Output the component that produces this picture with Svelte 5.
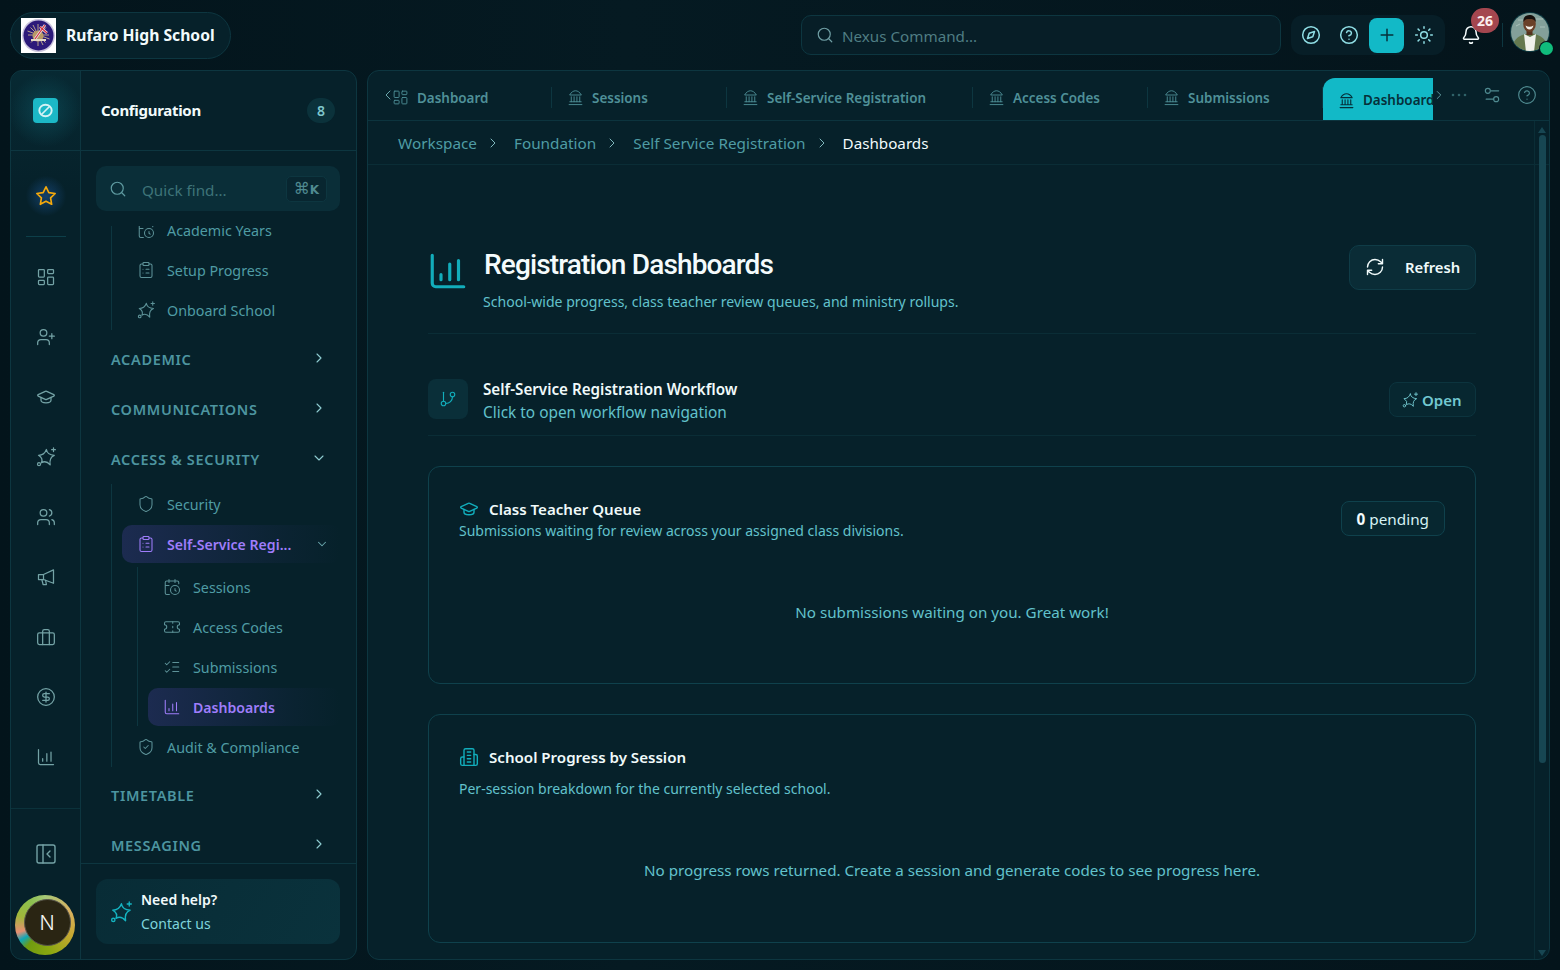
<script lang="ts">
  // lucide-style icon bodies, drawn on a 24 box
  const ICONS: Record<string, string> = {
    star: '<polygon points="12 2 15.09 8.26 22 9.27 17 14.14 18.18 21.02 12 17.77 5.82 21.02 7 14.14 2 9.27 8.91 8.26"/>',
    grid: '<rect x="3" y="3" width="7" height="9" rx="1"/><rect x="14" y="3" width="7" height="5" rx="1"/><rect x="14" y="12" width="7" height="9" rx="1"/><rect x="3" y="16" width="7" height="5" rx="1"/>',
    userPlus: '<path d="M16 21v-2a4 4 0 0 0-4-4H6a4 4 0 0 0-4 4v2"/><circle cx="9" cy="7" r="4"/><path d="M19 8v6M22 11h-6"/>',
    cap: '<path d="M21.42 10.922a1 1 0 0 0-.019-1.838L12.83 5.18a2 2 0 0 0-1.66 0L2.6 9.08a1 1 0 0 0 0 1.832l8.57 3.908a2 2 0 0 0 1.66 0z"/><path d="M6 12.5V16a6 3 0 0 0 12 0v-3.5"/>',
    spark: '<path d="M12.5 3 Q13.5 9.5 22 10 Q15.5 12.5 17 21.5 Q12 15.5 6.500 19 Q9 13.5 3 10 Q10 10 12.5 3z"/><path d="M21 1v4.500M18.750 3.250h4.500"/><circle cx="3.600" cy="20.600" r="1.800"/>',
    users: '<path d="M16 21v-2a4 4 0 0 0-4-4H6a4 4 0 0 0-4 4v2"/><circle cx="9" cy="7" r="4"/><path d="M22 21v-2a4 4 0 0 0-3-3.87M16 3.13a4 4 0 0 1 0 7.75"/>',
    megaphone: '<path d="M3 9h6L21 3.500v16L9 15H3z"/><path d="M9 9v6M7 15l1.500 6h4l-1-5"/>',
    briefcase: '<rect x="2" y="7" width="20" height="14" rx="2"/><path d="M16 21V5a2 2 0 0 0-2-2h-4a2 2 0 0 0-2 2v16"/>',
    dollar: '<circle cx="12" cy="12" r="10"/><path d="M16 8h-6a2 2 0 1 0 0 4h4a2 2 0 1 1 0 4H8M12 18V6"/>',
    chart: '<path d="M3 3v16a2 2 0 0 0 2 2h16"/><path d="M8 17v-3M13 17V8M18 17V6"/>',
    collapse: '<rect x="3" y="3" width="18" height="18" rx="2"/><path d="M9 3v18M16 15l-3-3 3-3"/>',
    search: '<circle cx="11" cy="11" r="8"/><path d="m21 21-4.3-4.3"/>',
    right: '<path d="m9 18 6-6-6-6"/>',
    left: '<path d="m15 18-6-6 6-6"/>',
    down: '<path d="m6 9 6 6 6-6"/>',
    calendar: '<path d="M21 7.5V6a2 2 0 0 0-2-2H5a2 2 0 0 0-2 2v14a2 2 0 0 0 2 2h3.5M16 2v4M8 2v4M3 10h5M17.5 17.5 16 16.3V14"/><circle cx="16" cy="16" r="6"/>',
    clipboard: '<rect x="8" y="2" width="8" height="4" rx="1"/><path d="M16 4h2a2 2 0 0 1 2 2v14a2 2 0 0 1-2 2H6a2 2 0 0 1-2-2V6a2 2 0 0 1 2-2h2M12 11h4M12 16h4M8 11h.01M8 16h.01"/>',
    shield: '<path d="M20 13c0 5-3.5 7.5-7.66 8.95a1 1 0 0 1-.67-.01C7.5 20.5 4 18 4 13V6a1 1 0 0 1 1-1c2 0 4.5-1.2 6.24-2.72a1.17 1.17 0 0 1 1.52 0C14.51 3.81 17 5 19 5a1 1 0 0 1 1 1z"/>',
    shieldCheck: '<path d="M20 13c0 5-3.5 7.5-7.66 8.95a1 1 0 0 1-.67-.01C7.5 20.5 4 18 4 13V6a1 1 0 0 1 1-1c2 0 4.5-1.2 6.24-2.72a1.17 1.17 0 0 1 1.52 0C14.51 3.81 17 5 19 5a1 1 0 0 1 1 1z"/><path d="m9 12 2 2 4-4"/>',
    ticket: '<path d="M2 9a3 3 0 0 1 0 6v2a2 2 0 0 0 2 2h16a2 2 0 0 0 2-2v-2a3 3 0 0 1 0-6V7a2 2 0 0 0-2-2H4a2 2 0 0 0-2 2Z"/><path d="M13 5v2M13 17v2M13 11v2"/>',
    checks: '<path d="m3 17 2 2 4-4M3 7l2 2 4-4M13 6h8M13 12h8M13 18h8"/>',
    bank: '<path d="M3 22h18M6 18v-7M10 18v-7M14 18v-7M18 18v-7M4 18h16"/><path d="M4 8C6 4.500 9 2.500 12 2.500S18 4.500 20 8z"/>',
    branch: '<path d="M6 3v12"/><circle cx="18" cy="6" r="3"/><circle cx="6" cy="18" r="3"/><path d="M18 9a9 9 0 0 1-9 9"/>',
    compass: '<circle cx="12" cy="12" r="10"/><polygon points="16.24 7.76 14.12 14.12 7.76 16.24 9.88 9.88"/>',
    help: '<circle cx="12" cy="12" r="10"/><path d="M9.09 9a3 3 0 0 1 5.83 1c0 2-3 3-3 3M12 17h.01"/>',
    plus: '<path d="M5 12h14M12 5v14"/>',
    sun: '<circle cx="12" cy="12" r="4"/><path d="M12 2v2M12 20v2M4.93 4.93l1.41 1.41M17.66 17.66l1.41 1.41M2 12h2M20 12h2M6.34 17.66l-1.41 1.41M19.07 4.93l-1.41 1.41"/>',
    bell: '<path d="M10.268 21a2 2 0 0 0 3.464 0"/><path d="M3.262 15.326A1 1 0 0 0 4 17h16a1 1 0 0 0 .74-1.673C19.41 13.956 18 12.499 18 8A6 6 0 0 0 6 8c0 4.499-1.411 5.956-2.738 7.326"/>',
    refresh: '<path d="M3 12a9 9 0 0 1 9-9 9.75 9.75 0 0 1 6.74 2.74L21 8M21 3v5h-5M21 12a9 9 0 0 1-9 9 9.75 9.75 0 0 1-6.74-2.74L3 16M8 16H3v5"/>',
    sliders: '<path d="M20 7h-9M14 17H5"/><circle cx="17" cy="17" r="3"/><circle cx="7" cy="7" r="3"/>',
    building: '<path d="M6 22V4a2 2 0 0 1 2-2h8a2 2 0 0 1 2 2v18Z"/><path d="M6 12H4a2 2 0 0 0-2 2v6a2 2 0 0 0 2 2h2M18 9h2a2 2 0 0 1 2 2v9a2 2 0 0 1-2 2h-2M10 6h4M10 10h4M10 14h4M10 18h4"/>',
  };

  const railIcons = ["grid", "userPlus", "cap", "spark", "users", "megaphone", "briefcase", "dollar", "chart"];

  const tabs = [
    { label: "Dashboard", icon: "grid" },
    { label: "Sessions", icon: "bank" },
    { label: "Self-Service Registration", icon: "bank" },
    { label: "Access Codes", icon: "bank" },
    { label: "Submissions", icon: "bank" },
  ];

  const crumbs = ["Workspace", "Foundation", "Self Service Registration"];

  const subItems = [
    { label: "Sessions", icon: "calendar" },
    { label: "Access Codes", icon: "ticket" },
    { label: "Submissions", icon: "checks" },
    { label: "Dashboards", icon: "chart", active: true },
  ];
</script>

{#snippet icon(name: string, size = 18, width = 1.5)}
  <svg class="ico" width={size} height={size} viewBox="0 0 24 24" fill="none" stroke="currentColor" stroke-width={width} stroke-linecap="round" stroke-linejoin="round" aria-hidden="true">{@html ICONS[name]}</svg>
{/snippet}

{#snippet navItem(label: string, name: string, active = false)}
  <div class="item" class:active>
    {@render icon(name, 18, 1.4)}
    <span class="item-label">{label}</span>
  </div>
{/snippet}

{#snippet heading(label: string, open = false)}
  <div class="heading">
    <span>{label}</span>
    {@render icon(open ? "down" : "right", 16, 1.6)}
  </div>
{/snippet}

<div class="app">
  <header class="topbar">
    <div class="school">
      <svg class="school-logo" width="35" height="35" viewBox="0 0 35 35" aria-hidden="true">
        <rect width="35" height="35" fill="#fff" />
        <circle cx="17.5" cy="17.5" r="16.5" fill="#c9c3dc" />
        <circle cx="17.5" cy="17.5" r="15" fill="#2c1a7a" />
        <g stroke="#d9c48f" stroke-width=".8">
          <path d="M17 6v22M7 17h21M9.5 9.5l15 15M25 9.5l-15 15M12 7l10 20M6.5 13l22 8" />
        </g>
        <circle cx="17" cy="18" r="5.5" fill="#b99a66" />
        <path d="M14 21 24 7M19 9l7 6" stroke="#e8e4ee" stroke-width="2.6" />
        <path d="M14 21 24 7M19 9l7 6" stroke="#d8303c" stroke-width="1.2" />
        <path d="M10 22h15" stroke="#e4d9c6" stroke-width="2" />
      </svg>
      <span>Rufaro High School</span>
    </div>

    <div class="command">
      {@render icon("search", 18, 1.6)}
      <span>Nexus Command...</span>
    </div>

    <div class="tools">
      <button class="tool">{@render icon("compass", 20, 1.8)}</button>
      <button class="tool">{@render icon("help", 20, 1.8)}</button>
      <button class="tool add">{@render icon("plus", 20, 1.8)}</button>
      <button class="tool">{@render icon("sun", 20, 1.8)}</button>
    </div>

    <div class="bell">
      {@render icon("bell", 20, 1.8)}
      <span class="bell-count">26</span>
    </div>
    <span class="bar-sep"></span>
    <div class="avatar">
      <svg width="40" height="40" viewBox="0 0 40 40" aria-hidden="true">
        <clipPath id="avatar-clip"><circle cx="20" cy="20" r="19" /></clipPath>
        <circle cx="20" cy="20" r="20" fill="#0d3a42" />
        <g clip-path="url(#avatar-clip)">
          <rect width="40" height="40" fill="#83a09a" />
          <path d="M8 8h6M26 7h7M6 14l4-2M30 15h5" stroke="#b4c8c2" stroke-width=".8" />
          <path d="M2 40c0-12 6-17 18-19 12 2 18 7 18 19z" fill="#65794f" />
          <path d="M14 22l6 3 6-3-2 18h-8z" fill="#f0f2ec" />
          <rect x="16.500" y="16" width="6" height="7" fill="#55331f" />
          <ellipse cx="19.500" cy="12" rx="6.300" ry="8" fill="#6a4028" />
          <path d="M13.200 10c0-5.500 3-7 6.300-7s6.300 1.500 6.300 7c-1.500-2.500-3-3-6.300-3s-4.800.5-6.300 3z" fill="#17100c" />
          <path d="M15.500 13.500q4 2.500 8 0-1 4-4 4t-4-4z" fill="#f4f1ea" />
        </g>
      </svg>
      <span class="online"></span>
    </div>
  </header>

  <div class="shell">
    <aside class="sidebar">
      <div class="rail">
        <div class="rail-top">
          <svg width="25" height="25" viewBox="0 0 25 25" aria-hidden="true">
            <rect width="25" height="25" rx="4" fill="#1cb8c6" />
            <ellipse cx="12.500" cy="12.500" rx="6.200" ry="5.800" fill="none" stroke="#d4f3f5" stroke-width="1.900" />
            <path d="M8.500 16.500 16.500 8.500" stroke="#d4f3f5" stroke-width="1.700" />
          </svg>
        </div>
        <div class="rail-star">{@render icon("star", 22, 1.8)}</div>
        <span class="rail-line"></span>
        {#each railIcons as name}
          <div class="rail-btn">{@render icon(name, 20, 1.5)}</div>
        {/each}
        <div class="rail-foot">
          <div class="rail-collapse">{@render icon("collapse", 24, 1.4)}</div>
          <div class="ring"><div class="ring-in">N</div></div>
        </div>
      </div>

      <div class="side">
        <div class="side-head">
          <span class="side-title">Configuration</span>
          <span class="side-count">8</span>
        </div>
        <div class="find-wrap">
          <div class="find">
            {@render icon("search", 18, 1.6)}
            <span class="find-text">Quick find...</span>
            <kbd>⌘<small>K</small></kbd>
          </div>
        </div>

        <nav class="nav">
          <div class="nav-scroll">
            <div class="tree">
              {@render navItem("Academic Years", "calendar")}
              {@render navItem("Setup Progress", "clipboard")}
              {@render navItem("Onboard School", "spark")}
            </div>
            {@render heading("ACADEMIC")}
            {@render heading("COMMUNICATIONS")}
            {@render heading("ACCESS & SECURITY", true)}
            <div class="tree open-tree">
              {@render navItem("Security", "shield")}
              <div class="item active parent">
                {@render icon("clipboard", 18, 1.4)}
                <span class="item-label">Self-Service Regi...</span>
                {@render icon("down", 14, 1.8)}
              </div>
              <div class="tree sub">
                {#each subItems as s}
                  {@render navItem(s.label, s.icon, s.active)}
                {/each}
              </div>
              {@render navItem("Audit & Compliance", "shieldCheck")}
            </div>
            {@render heading("TIMETABLE")}
            {@render heading("MESSAGING")}
          </div>
        </nav>

        <div class="help-wrap">
          <div class="help">
            {@render icon("spark", 22, 1.5)}
            <div>
              <div class="help-title">Need help?</div>
              <div class="help-sub">Contact us</div>
            </div>
          </div>
        </div>
      </div>
    </aside>

    <main class="main">
      <div class="tabbar">
        <div class="tabs">
          <span class="tabs-prev">{@render icon("left", 16, 1.5)}</span>
          {#each tabs as t}
            <div class="tab">
              <span class="tab-ico">{@render icon(t.icon, 17, 1.3)}</span>
              <span>{t.label}</span>
            </div>
          {/each}
          <div class="tab current">
            <span class="tab-ico">{@render icon("bank", 17, 1.6)}</span>
            <span>Dashboards</span>
          </div>
        </div>
        <div class="tab-tools">
          <span class="tabs-next">{@render icon("right", 14, 1.5)}</span>
          <svg class="dots" width="16" height="4" viewBox="0 0 16 4" aria-hidden="true">
            <circle cx="2" cy="2" r="1.300" />
            <circle cx="8" cy="2" r="1.300" />
            <circle cx="14" cy="2" r="1.300" />
          </svg>
          <span class="tool-sliders">{@render icon("sliders", 20, 1.4)}</span>
          <span class="tool-help">{@render icon("help", 20, 1.4)}</span>
        </div>
      </div>

      <div class="crumbs">
        {#each crumbs as c}
          <span>{c}</span>
          {@render icon("right", 16, 1.5)}
        {/each}
        <span class="crumb-now">Dashboards</span>
      </div>

      <div class="content">
        <section class="page-head">
          <span class="page-ico">{@render icon("chart", 42, 1.8)}</span>
          <div class="page-text">
            <h1>Registration Dashboards</h1>
            <p>School-wide progress, class teacher review queues, and ministry rollups.</p>
          </div>
          <button class="refresh">
            {@render icon("refresh", 20, 1.7)}
            <span>Refresh</span>
          </button>
        </section>

        <section class="workflow">
          <span class="wf-ico">{@render icon("branch", 18, 1.5)}</span>
          <div class="wf-text">
            <div class="wf-title">Self-Service Registration Workflow</div>
            <div class="wf-sub">Click to open workflow navigation</div>
          </div>
          <button class="open">
            {@render icon("spark", 16, 1.4)}
            <span>Open</span>
          </button>
        </section>

        <section class="card">
          <div class="card-row">
            <div>
              <div class="card-title">{@render icon("cap", 20, 1.7)}<span>Class Teacher Queue</span></div>
              <div class="card-sub">Submissions waiting for review across your assigned class divisions.</div>
            </div>
            <span class="pending"><b>0</b> pending</span>
          </div>
          <p class="empty">No submissions waiting on you. Great work!</p>
        </section>

        <section class="card second">
          <div class="card-title">{@render icon("building", 20, 1.7)}<span>School Progress by Session</span></div>
          <div class="card-sub spaced">Per-session breakdown for the currently selected school.</div>
          <p class="empty">No progress rows returned. Create a session and generate codes to see progress here.</p>
        </section>
      </div>

      <div class="scrollbar">
        <span class="arrow up"></span>
        <span class="thumb"></span>
        <span class="arrow dn"></span>
      </div>
    </main>
  </div>
</div>

<style>
  :global(body) {
    margin: 0;
    background: #04131a;
    font-family: "Noto Sans", "Open Sans", sans-serif;
  }
  .ico { display: block; flex-shrink: 0; }
  button { font-family: inherit; cursor: pointer; padding: 0; }

  .app {
    height: 970px;
    overflow: hidden;
    display: grid;
    grid-template-rows: 70px 1fr;
    background: linear-gradient(90deg, #03141b, #051a22 40%, #04141b);
  }

  /* top bar */
  .topbar {
    display: flex;
    align-items: center;
    padding: 0 10px;
  }
  .school {
    display: flex;
    align-items: center;
    gap: 10px;
    width: 221px;
    height: 47px;
    box-sizing: border-box;
    padding-left: 10px;
    border: 1px solid #0d3640;
    border-radius: 24px;
    background: #06212a;
    color: #f2fbfc;
    font-size: 15.7px;
    font-weight: 700;
  }
  .school-logo { flex-shrink: 0; }
  .command {
    display: flex;
    align-items: center;
    gap: 8px;
    width: 480px;
    height: 40px;
    box-sizing: border-box;
    margin-left: 570px;
    padding-left: 14px;
    border: 1px solid #0d3640;
    border-radius: 10px;
    background: #071e27;
    color: #6f9ea4;
    font-size: 15.2px;
  }
  .command span { color: #4f7d83; padding-top: 2px; }
  .tools {
    display: flex;
    align-items: center;
    margin-left: 10px;
    width: 154px;
    height: 40px;
    padding-left: 1px;
    box-sizing: border-box;
    border-radius: 12px;
    background: #071e27;
  }
  .tool {
    width: 38px;
    height: 35px;
    display: flex;
    align-items: center;
    justify-content: center;
    border: none;
    border-radius: 8px;
    background: none;
    color: #8fdde4;
  }
  .tool.add {
    width: 35px;
    margin: 0 1px;
    background: #12b9c7;
    color: #06303a;
  }
  .bell {
    position: relative;
    margin-left: 16px;
    color: #f4fbfc;
  }
  .bell-count {
    position: absolute;
    top: -17px;
    left: 10px;
    width: 28px;
    height: 25px;
    border-radius: 13px;
    background: #a4464f;
    color: #fbeeee;
    font-size: 14px;
    font-weight: 700;
    line-height: 25px;
    text-align: center;
  }
  .bar-sep {
    width: 1px;
    height: 24px;
    margin-left: 21px;
    background: #0d3640;
  }
  .avatar {
    position: relative;
    width: 40px;
    height: 40px;
    margin: -6px 0 0 7px;
  }
  .avatar svg { display: block; }
  .online {
    position: absolute;
    right: -3px;
    bottom: -3px;
    width: 13px;
    height: 13px;
    border-radius: 50%;
    background: #10bc7c;
    box-shadow: 0 0 0 1px #04131a;
  }

  /* shell */
  .shell {
    display: grid;
    grid-template-columns: 347px 1fr;
    gap: 10px;
    padding: 0 10px 10px;
    min-height: 0;
  }

  /* sidebar */
  .sidebar {
    display: grid;
    grid-template-columns: 70px 1fr;
    min-height: 0;
    overflow: hidden;
    border: 1px solid #0d3640;
    border-radius: 12px;
    background: #06212a;
  }
  .rail {
    display: flex;
    flex-direction: column;
    align-items: center;
    border-right: 1px solid #0d3640;
    color: #74a3a6;
    background: linear-gradient(180deg, rgba(8, 48, 58, .55), transparent 120px);
  }
  .rail-top {
    display: flex;
    align-items: center;
    justify-content: center;
    align-self: stretch;
    flex: 0 0 79px;
    border-bottom: 1px solid #0d3640;
    background: radial-gradient(circle at 50% 50%, rgba(18, 110, 125, .4), transparent 70%);
  }
  .rail-star {
    display: flex;
    align-items: center;
    justify-content: center;
    width: 44px;
    height: 44px;
    margin-top: 23px;
    color: #f5a90c;
    background: radial-gradient(circle, rgba(40, 110, 200, .4), transparent 65%);
  }
  .rail-line {
    width: 40px;
    height: 1px;
    margin: 18px 0 10px;
    background: #0d3f49;
  }
  .rail-btn {
    flex: 0 0 60px;
    display: flex;
    align-items: center;
    justify-content: center;
  }
  .rail-foot {
    align-self: stretch;
    margin-top: 21px;
    border-top: 1px solid #0b323b;
    display: flex;
    flex-direction: column;
    align-items: center;
  }
  .rail-collapse { margin-top: 33px; }
  .ring {
    width: 60px;
    height: 60px;
    margin: 29px 0 0 -2px;
    padding: 4px 0 0 9px;
    box-sizing: border-box;
    border-radius: 50%;
    background: conic-gradient(#a6c878, #d9b060 60deg, #c8a832 110deg, #8aa810 170deg, #6f9a10 220deg, #0fa6b8 238deg, #e58f72 255deg, #a0b83a 290deg, #8cc050 330deg, #a6c878);
  }
  .ring-in {
    width: 47px;
    height: 47px;
    box-sizing: border-box;
    display: flex;
    align-items: center;
    justify-content: center;
    border: 1px solid #57544a;
    border-radius: 50%;
    background: #2a2513;
    color: #f4f4f0;
    font-family: "Inter", sans-serif;
    font-size: 20px;
    font-weight: 300;
  }

  .side {
    display: flex;
    flex-direction: column;
    min-width: 0;
    min-height: 0;
  }
  .side-head {
    display: flex;
    align-items: center;
    justify-content: space-between;
    flex: 0 0 79px;
    padding: 0 21px 0 20px;
    border-bottom: 1px solid #0d3640;
  }
  .side-title {
    margin-bottom: 2px;
    color: #f2fbfc;
    font-size: 15px;
    font-weight: 700;
    letter-spacing: -.3px;
  }
  .side-count {
    width: 28px;
    height: 25px;
    border-radius: 13px;
    background: #0b323b;
    color: #7fc6cc;
    font-size: 14px;
    font-weight: 600;
    line-height: 25px;
    text-align: center;
  }
  .find-wrap { padding: 15px 16px 15px 15px; }
  .find {
    display: flex;
    align-items: center;
    height: 45px;
    padding: 0 13px 0 13px;
    border-radius: 10px;
    background: #0a2e38;
    color: #5e9aa0;
  }
  .find-text {
    flex: 1;
    margin-left: 15px;
    padding-top: 2px;
    color: #3e7479;
    font-size: 15.2px;
  }
  kbd {
    width: 41px;
    height: 26px;
    box-sizing: border-box;
    border: 1px solid #0d3640;
    border-radius: 5px;
    background: #082630;
    color: #4f8a90;
    font-family: "DejaVu Sans", sans-serif;
    font-size: 16px;
    font-weight: 400;
    line-height: 24px;
    text-align: center;
  }
  kbd small { font-size: 12px; font-weight: 700; }
  .nav {
    flex: 1;
    min-height: 0;
    overflow: hidden;
    padding: 0 15px 0 30px;
    border-bottom: 1px solid #0d3640;
  }
  .nav-scroll { margin-top: -16px; }
  .tree {
    border-left: 1px solid #0d3640;
    margin-bottom: 3px;
  }
  .tree.open-tree {
    margin-top: 1px;
    margin-bottom: 2px;
  }
  .tree.sub {
    margin: 0 0 0 25px;
  }
  .item {
    display: flex;
    align-items: center;
    height: 40px;
    box-sizing: border-box;
    margin-left: 10px;
    padding-left: 15px;
    color: #4f9ca4;
    font-size: 14.3px;
  }
  .item .ico { color: #5d9298; }
  .item-label {
    flex: 1;
    margin-left: 12px;
    white-space: nowrap;
  }
  .item.active {
    border-radius: 10px;
    background: linear-gradient(90deg, #1c2b50, rgba(28, 43, 80, .2) 75%, rgba(28, 43, 80, 0));
    color: #9f7dfb;
    font-weight: 600;
    font-size: 14.1px;
    height: 38px;
    margin-top: 1px;
    margin-bottom: 1px;
  }
  .item.active .ico { color: #9f7dfb; }
  .item.parent { margin-bottom: 4px; }
  .item.parent > .ico:last-child { color: #6ba9ae; margin-right: 12px; }
  .heading {
    display: flex;
    align-items: center;
    justify-content: space-between;
    height: 50px;
    padding-right: 14px;
    color: #4d95a0;
    font-size: 14.5px;
    font-weight: 600;
    letter-spacing: .65px;
  }
  .heading span { margin-top: 2px; }
  .heading .ico { color: #8fcdd2; }
  .help-wrap { padding: 15px 16px 15px 15px; }
  .help {
    display: flex;
    align-items: center;
    gap: 9px;
    height: 65px;
    padding-left: 14px;
    border-radius: 12px;
    background: linear-gradient(120deg, #082c36, #0a323c);
    color: #14b3c0;
  }
  .help-title {
    color: #f2fbfc;
    font-size: 14px;
    font-weight: 600;
    line-height: 24px;
  }
  .help-sub {
    color: #7fd4dc;
    font-size: 14px;
    line-height: 24px;
  }

  /* main panel */
  .main {
    position: relative;
    display: flex;
    flex-direction: column;
    min-width: 0;
    min-height: 0;
    overflow: hidden;
    border: 1px solid #0d3640;
    border-radius: 12px;
    background: #06212a;
  }
  .tabbar {
    display: flex;
    flex: 0 0 50px;
    box-sizing: border-box;
    border-bottom: 1px solid #0c343e;
  }
  .tabs {
    position: relative;
    display: flex;
    align-items: center;
    width: 1056px;
    margin-left: 9px;
    overflow: hidden;
    color: #4f9098;
    font-size: 13.45px;
    font-weight: 600;
  }
  .tabs-prev {
    position: absolute;
    left: 3px;
    top: 16px;
    color: #6aa6ac;
  }
  .tab {
    position: relative;
    display: flex;
    align-items: center;
    flex-shrink: 0;
    box-sizing: border-box;
    min-width: 175px;
    height: 21px;
    margin-top: 4px;
    padding: 0 46px 0 15px;
    border-right: 1px solid #0d3640;
    white-space: nowrap;
  }
  .tab-ico {
    display: block;
    width: 25px;
    color: #4f9098;
  }
  .tab.current {
    align-self: flex-end;
    height: 42px;
    margin-top: 0;
    padding-top: 2px;
    border: none;
    border-radius: 12px 12px 0 0;
    background: linear-gradient(90deg, #12b9c7 85%, #0e8f9b);
    color: #06303a;
  }
  .tab.current .tab-ico { color: #06303a; }
  .tab-tools {
    display: flex;
    align-items: center;
    color: #4f8a90;
    padding-bottom: 2px;
  }
  .tabs-next {
    margin-left: -1px;
    color: #6aa6ac;
  }
  .dots {
    display: block;
    margin-left: 5px;
    fill: #2f6268;
  }
  .tool-sliders { margin-left: 15px; }
  .tool-help { margin-left: 15px; }
  .crumbs {
    display: flex;
    align-items: center;
    flex: 0 0 44px;
    box-sizing: border-box;
    gap: 8px;
    padding-left: 30px;
    border-bottom: 1px solid #0a2d36;
    color: #4f9ca4;
    font-size: 15.3px;
  }
  .crumbs .ico { color: #7fb8bd; margin-right: 5px; }
  .crumb-now {
    color: #f2fbfc;
    font-size: 15.2px;
  }
  .content {
    padding: 80px 73px 0 60px;
  }
  .page-head {
    display: flex;
    align-items: flex-start;
    padding-bottom: 20px;
    border-bottom: 1px solid #0a2d36;
  }
  .page-ico {
    width: 56px;
    margin-top: 5px;
    margin-left: -1px;
    color: #12adbb;
  }
  .page-text { flex: 1; }
  h1 {
    margin: 1px 0 -1px 1px;
    color: #f4fbfc;
    font-family: Roboto, "Noto Sans", sans-serif;
    font-size: 28px;
    font-weight: 500;
    line-height: 38px;
    letter-spacing: -.85px;
  }
  .page-text p {
    margin: 8px 0 0;
    color: #62c2cc;
    font-size: 14.05px;
    line-height: 22px;
  }
  .refresh {
    display: flex;
    align-items: center;
    gap: 20px;
    width: 127px;
    height: 45px;
    box-sizing: border-box;
    padding: 0 0 2px 15px;
    border: 1px solid #0f3c47;
    border-radius: 10px;
    background: #0a2c36;
    color: #f0fafa;
    font-size: 14.8px;
    font-weight: 600;
  }
  .workflow {
    display: flex;
    align-items: flex-start;
    margin-top: 45px;
    padding-bottom: 16px;
    border-bottom: 1px solid #0a2d36;
  }
  .wf-ico {
    display: flex;
    align-items: center;
    justify-content: center;
    width: 40px;
    height: 40px;
    margin-right: 15px;
    border-radius: 8px;
    background: #0a2f39;
    color: #12adbb;
  }
  .wf-text {
    flex: 1;
    height: 40px;
  }
  .wf-title {
    color: #f0fafa;
    font-size: 15.2px;
    font-weight: 600;
    line-height: 20px;
  }
  .wf-sub {
    color: #62c2cc;
    font-size: 15.4px;
    line-height: 28px;
  }
  .open {
    display: flex;
    align-items: center;
    gap: 4px;
    width: 87px;
    height: 35px;
    box-sizing: border-box;
    margin-top: 3px;
    padding-left: 12px;
    border: 1px solid #0c343e;
    border-radius: 8px;
    background: #072730;
    color: #72c8d0;
    font-size: 15px;
    font-weight: 600;
  }
  .card {
    margin-top: 30px;
    padding: 30px 30px 60px;
    border: 1px solid #0f414c;
    border-radius: 12px;
  }
  .card.second { padding-bottom: 61px; }
  .card-row {
    display: flex;
    align-items: flex-start;
    justify-content: space-between;
  }
  .card-title {
    display: flex;
    align-items: center;
    gap: 10px;
    color: #f0fafa;
    font-size: 15.1px;
    font-weight: 600;
    line-height: 24px;
  }
  .card-title .ico { color: #12adbb; }
  .card-sub {
    color: #62c2cc;
    font-size: 14px;
    line-height: 20px;
  }
  .card-sub.spaced { margin-top: 10px; }
  .pending {
    margin-top: 4px;
    padding: 0 15px;
    height: 33px;
    border: 1px solid #0f414c;
    border-radius: 8px;
    background: #072730;
    color: #d6f2f4;
    font-size: 15.3px;
    line-height: 35px;
  }
  .pending b { color: #f4fbfc; font-weight: 700; }
  .empty {
    margin: 60px 0 0;
    color: #62c2cc;
    font-size: 15.2px;
    line-height: 22px;
    text-align: center;
  }

  /* overlay scrollbar */
  .scrollbar {
    position: absolute;
    top: 50px;
    right: 0;
    bottom: 0;
    width: 14px;
    display: flex;
    flex-direction: column;
    align-items: center;
    border-left: 1px solid #0a2d36;
  }
  .arrow {
    width: 0;
    height: 0;
    border-left: 4px solid transparent;
    border-right: 4px solid transparent;
  }
  .arrow.up { margin-top: 6px; border-bottom: 6px solid #174652; }
  .arrow.dn { margin: auto 0 3px; border-top: 6px solid #174652; }
  .thumb {
    width: 7px;
    height: 628px;
    margin-top: 2px;
    border-radius: 4px;
    background: #174652;
  }
</style>
